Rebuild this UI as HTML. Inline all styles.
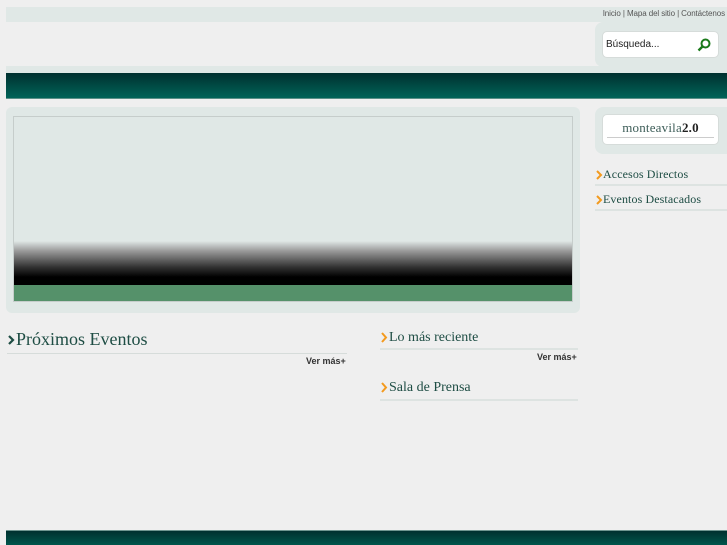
<!DOCTYPE html>
<html><head><meta charset="utf-8"><style>
*{margin:0;padding:0;box-sizing:border-box}
body{width:727px;height:545px;background:#efefef;position:relative;overflow:hidden;font-family:"Liberation Serif",serif}
.a{position:absolute}
.serif{font-family:"Liberation Serif",serif;color:#1e4d44}
.cv{position:absolute}
</style></head><body>
<div class="a" style="left:6px;top:7px;width:721px;height:15px;background:#e0e8e6"></div>
<div class="a" style="right:2px;top:9px;font:8px 'Liberation Sans',sans-serif;color:#555;letter-spacing:-0.1px">Inicio | Mapa del sitio | Contáctenos</div>
<div class="a" style="left:595px;top:22px;width:132px;height:45px;background:#e0e8e6;border-radius:8px 0 0 8px"></div>
<div class="a" style="left:602px;top:31px;width:117px;height:27px;background:#fff;border-radius:5px;border:1px solid #d6dcda"></div>
<div class="a" style="left:606px;top:39px;font:10px 'Liberation Sans',sans-serif;color:#222">Búsqueda...</div>
<svg class="a" style="left:697px;top:38px" width="14" height="14" viewBox="0 0 14 14"><circle cx="8.5" cy="5.5" r="4" fill="none" stroke="#1a7a1a" stroke-width="2"/><path d="M5.5 8.5L1.5 12.5" stroke="#1a7a1a" stroke-width="2.4"/></svg>
<div class="a" style="left:6px;top:66px;width:721px;height:7px;background:#e0e8e6"></div>
<div class="a" style="left:6px;top:73px;width:721px;height:26px;background:linear-gradient(#00302f,#006358);border-bottom:1px solid #5a8f88"></div>
<div class="a" style="left:6px;top:107px;width:574px;height:206px;background:#e0e8e6;border-radius:6px"></div>
<div class="a" style="left:13px;top:116px;width:560px;height:186px;border:1px solid #c6cdcb;background:linear-gradient(#e0e8e6 0,#e0e8e6 124px,#999 134px,#333 150px,#000 160px,#000 168px,#55916a 168px)"></div>
<div class="a" style="left:595px;top:107px;width:132px;height:47px;background:#e0e8e6;border-radius:8px 0 0 8px"></div>
<div class="a" style="left:602px;top:114px;width:117px;height:31px;background:#fff;border-radius:5px;border:1px solid #d6dcda"></div>
<div class="a" style="left:607px;top:137px;width:107px;height:1px;background:#ccc"></div>
<div class="a serif" style="left:602px;top:120px;width:117px;text-align:center;font-size:13px;color:#3d5d58;letter-spacing:0.2px">monteavila<b style="color:#222">2.0</b></div>

<svg class="cv" style="left:595px;top:170px" width="8" height="10"><path d="M2 1L6 5L2 9" fill="none" stroke="#f39a1e" stroke-width="2"/></svg>
<div class="a serif" style="left:603px;top:167px;font-size:12px;letter-spacing:0.1px">Accesos Directos</div>
<div class="a" style="left:595px;top:184px;width:132px;height:2px;background:#dde3e1"></div>
<svg class="cv" style="left:595px;top:195px" width="8" height="10"><path d="M2 1L6 5L2 9" fill="none" stroke="#f39a1e" stroke-width="2"/></svg>
<div class="a serif" style="left:603px;top:192px;font-size:12px;letter-spacing:0.1px">Eventos Destacados</div>
<div class="a" style="left:595px;top:209px;width:132px;height:2px;background:#dde3e1"></div>

<svg class="cv" style="left:7px;top:334px" width="9" height="12"><path d="M2 2L6 6L2 10" fill="none" stroke="#1e4d44" stroke-width="2.2"/></svg>
<div class="a serif" style="left:16px;top:329px;font-size:18px">Próximos Eventos</div>
<div class="a" style="left:7px;top:353px;width:340px;height:1px;background:#d6dcda"></div>
<div class="a" style="left:306px;top:356px;font:bold 9px 'Liberation Sans',sans-serif;color:#333">Ver más+</div>

<svg class="cv" style="left:380px;top:332px" width="9" height="11"><path d="M2 1L6 5.5L2 10" fill="none" stroke="#f39a1e" stroke-width="2"/></svg>
<div class="a serif" style="left:389px;top:330px;font-size:14px">Lo más reciente</div>
<div class="a" style="left:380px;top:348px;width:198px;height:2px;background:#dde3e1"></div>
<div class="a" style="left:537px;top:352px;font:bold 9px 'Liberation Sans',sans-serif;color:#333">Ver más+</div>
<svg class="cv" style="left:380px;top:382px" width="9" height="11"><path d="M2 1L6 5.5L2 10" fill="none" stroke="#f39a1e" stroke-width="2"/></svg>
<div class="a serif" style="left:389px;top:380px;font-size:14px">Sala de Prensa</div>
<div class="a" style="left:380px;top:399px;width:198px;height:2px;background:#dde3e1"></div>
<div class="a" style="left:6px;top:530px;width:721px;height:15px;background:linear-gradient(#00302f,#00564c);border-top:1px solid #6f9690"></div>
</body></html>
